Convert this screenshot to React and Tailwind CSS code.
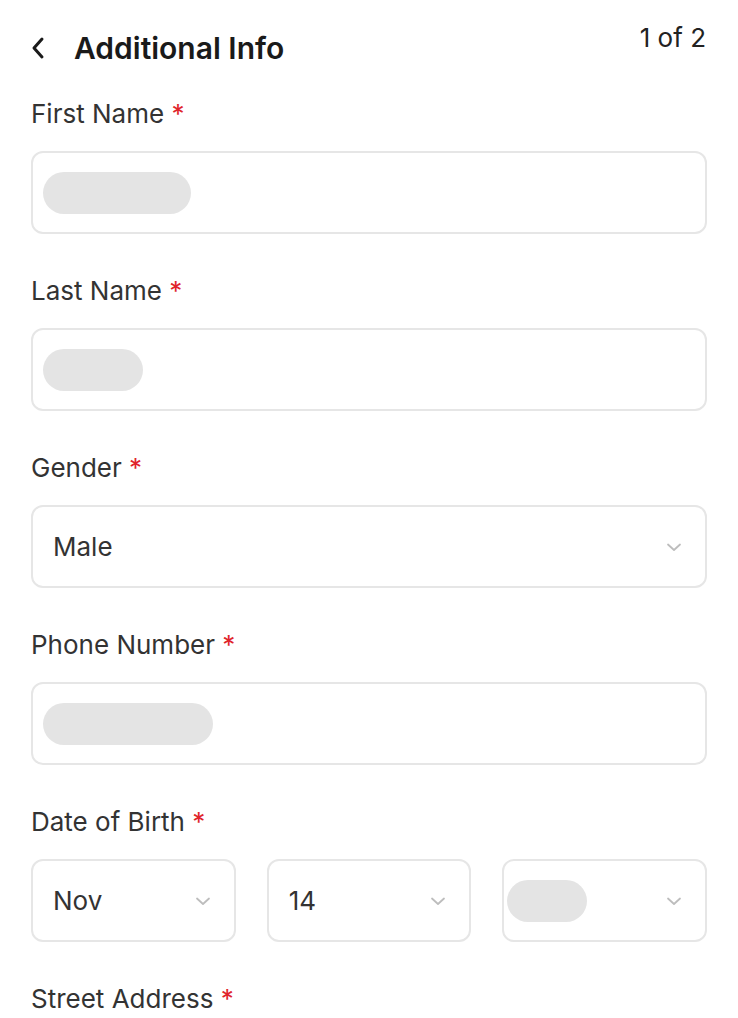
import React from 'react';

const Chevron = () => (
  <svg width="18" height="12" viewBox="0 0 18 12" fill="none" className="shrink-0">
    <path d="M3 3.5l6 5.5 6-5.5" stroke="#bdbdbd" strokeWidth="1.8" strokeLinecap="round" strokeLinejoin="round" />
  </svg>
);

const Blob = ({ className }) => <div className={`h-[42px] rounded-full bg-[#e4e4e4] ${className}`} />;

const Label = ({ children }) => (
  <div className="h-[32px] flex items-center text-[26px] text-[#333] whitespace-pre">
    {children}
    <span className="text-[#e0242b]"> *</span>
  </div>
);

const Field = ({ label, children, last }) => (
  <div className={last ? '' : 'mb-[40px]'}>
    <Label>{label}</Label>
    <div className="mt-[22px]">{children}</div>
  </div>
);

const Box = ({ children, className = '' }) => (
  <div className={`h-[83px] rounded-[12px] border-2 border-[#e6e6e6] bg-white flex items-center ${className}`}>
    {children}
  </div>
);

const App = () => {
  return (
    <div className="w-[738px] h-[1018px] overflow-hidden bg-white px-[31px]" style={{ fontFamily: 'Inter, "Noto Sans", sans-serif' }}>
      {/* Header */}
      <div className="flex items-start justify-between pt-[20px]">
        <div className="flex items-center h-[56px]">
          <svg width="16" height="24" viewBox="0 0 16 24" fill="none" className="ml-[-1px]">
            <path d="M12 3L4 12l8 9" stroke="#1a1a1a" strokeWidth="3" strokeLinecap="round" strokeLinejoin="round" />
          </svg>
          <h1 className="ml-[28px] text-[30px] font-semibold text-[#1a1a1a]">Additional Info</h1>
        </div>
        <div className="text-[26px] text-[#222] mt-[-2px] mr-[1px]">1 of 2</div>
      </div>

      <div className="mt-[21px]">
        <Field label="First Name">
          <Box className="px-[10px]">
            <Blob className="w-[148px]" />
          </Box>
        </Field>

        <Field label="Last Name">
          <Box className="px-[10px]">
            <Blob className="w-[100px]" />
          </Box>
        </Field>

        <Field label="Gender">
          <Box className="pl-[20px] pr-[22px] justify-between">
            <span className="text-[26px] text-[#333]">Male</span>
            <Chevron />
          </Box>
        </Field>

        <Field label="Phone Number">
          <Box className="px-[10px]">
            <Blob className="w-[170px]" />
          </Box>
        </Field>

        <Field label="Date of Birth">
          <div className="grid grid-cols-3 gap-[31px]">
            <Box className="pl-[20px] pr-[22px] justify-between">
              <span className="text-[26px] text-[#333]">Nov</span>
              <Chevron />
            </Box>
            <Box className="pl-[20px] pr-[22px] justify-between">
              <span className="text-[26px] text-[#333]">14</span>
              <Chevron />
            </Box>
            <Box className="pl-[3px] pr-[22px] justify-between">
              <Blob className="w-[80px] h-[40px]" />
              <Chevron />
            </Box>
          </div>
        </Field>

        <Field label="Street Address" last>
          <Box className="px-[10px]" />
        </Field>
      </div>
    </div>
  );
};

export default App;
